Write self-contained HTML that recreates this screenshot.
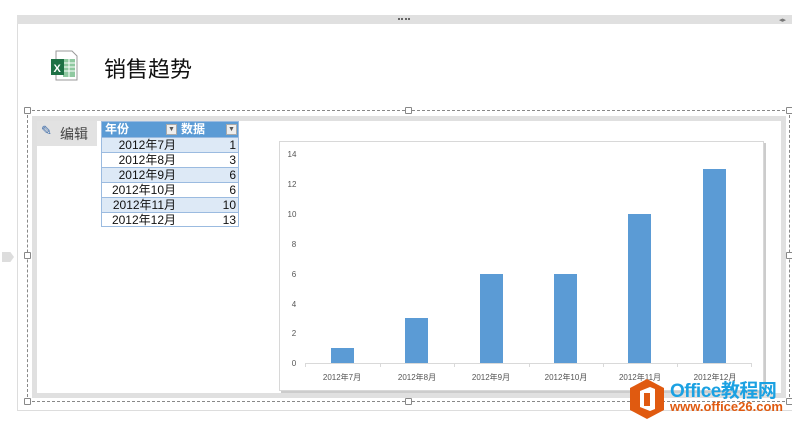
<!DOCTYPE html>
<html><head><meta charset="utf-8"><style>
*{margin:0;padding:0;box-sizing:border-box}
body{width:792px;height:425px;background:#fff;position:relative;overflow:hidden;font-family:"Liberation Sans","Noto Sans CJK SC",sans-serif}
.a{position:absolute}
.h{position:absolute;width:7px;height:7px;border:1px solid #888;background:#fff;border-radius:1px}
.r{position:absolute;left:0;width:136px;height:15px;line-height:14px;font-size:12px;border-top:1px solid #9bbbe0;color:#111}
.r .c1{position:absolute;right:62px;top:0}
.r .c2{position:absolute;right:2px;top:0}
.dd{position:absolute;top:2px;width:11px;height:11px;background:#eee;border:1px solid #aaa;font-size:7px;color:#555;text-align:center;line-height:10px}
</style></head><body>
<div class="a" style="left:17px;top:15px;width:775px;height:396px;border-left:1px solid #ddd;border-bottom:1px solid #ddd"></div>
<div class="a" style="left:17px;top:15px;width:775px;height:9px;background:#e0e0e0"></div>
<div class="a" style="left:398px;top:18px;width:12px;height:2px;border-top:2px dotted #666"></div>
<div class="a" style="left:779px;top:16px;font-size:7px;color:#777">◂▸</div>
<div class="a" style="left:2px;top:252px;width:12px;height:10px;background:#ddd;clip-path:polygon(0 0,70% 0,100% 50%,70% 100%,0 100%)"></div>
<svg class="a" style="left:50px;top:50px" width="28" height="31" viewBox="0 0 28 31">
<path d="M6 1h16l5 5v24H6z" fill="#fff" stroke="#999"/>
<rect x="13" y="9" width="12" height="18" fill="#8fc9a0"/>
<g stroke="#fff" stroke-width="1"><line x1="13" y1="13" x2="25" y2="13"/><line x1="13" y1="17" x2="25" y2="17"/><line x1="13" y1="21" x2="25" y2="21"/><line x1="19" y1="9" x2="19" y2="27"/></g>
<rect x="1" y="9" width="13" height="16" fill="#1e7145"/>
<text x="3.5" y="22" font-size="11" font-weight="bold" fill="#fff" font-family="Liberation Sans">X</text>
</svg>
<div class="a" style="left:104px;top:52px;font-size:22px;color:#111">销售趋势</div>
<div class="a" style="left:27px;top:110px;width:763px;height:292px;border:1px dashed #888"></div>
<div class="h" style="left:24px;top:107px"></div><div class="h" style="left:405px;top:107px"></div><div class="h" style="left:786px;top:107px"></div>
<div class="h" style="left:24px;top:252px"></div><div class="h" style="left:786px;top:252px"></div>
<div class="h" style="left:24px;top:398px"></div><div class="h" style="left:405px;top:398px"></div><div class="h" style="left:786px;top:398px"></div>
<div class="a" style="left:32px;top:116px;width:754px;height:282px;border:5px solid #e0e0e0;background:#fff"></div>
<div class="a" style="left:37px;top:121px;width:60px;height:25px;background:#e2e2e2"></div>
<div class="a" style="left:41px;top:123px;font-size:13px;color:#3a6aa8">✎</div>
<div class="a" style="left:60px;top:124px;font-size:14px;color:#444">编辑</div>
<div class="a" style="left:101px;top:121px;width:138px;height:106px;border:1px solid #9bbbe0;overflow:hidden">
 <div class="a" style="left:0;top:0;width:136px;height:15px;background:#5b9bd5;color:#fff;font-weight:bold;font-size:12px;line-height:14px">
  <span class="a" style="left:3px">年份</span><span class="dd" style="left:64px">▼</span>
  <span class="a" style="left:79px">数据</span><span class="dd" style="left:124px">▼</span>
 </div>
 <div class="r" style="top:15px;background:#dde9f6"><span class="c1">2012年7月</span><span class="c2">1</span></div>
 <div class="r" style="top:30px"><span class="c1">2012年8月</span><span class="c2">3</span></div>
 <div class="r" style="top:45px;background:#dde9f6"><span class="c1">2012年9月</span><span class="c2">6</span></div>
 <div class="r" style="top:60px"><span class="c1">2012年10月</span><span class="c2">6</span></div>
 <div class="r" style="top:75px;background:#dde9f6"><span class="c1">2012年11月</span><span class="c2">10</span></div>
 <div class="r" style="top:90px"><span class="c1">2012年12月</span><span class="c2">13</span></div>
</div>
<svg class="a" style="left:278px;top:140px" width="490" height="255" viewBox="278 140 490 255">
<rect x="279.5" y="141.5" width="484" height="249" fill="#fff" stroke="#d8d8d8"/>
<line x1="765" y1="143" x2="765" y2="392" stroke="#ccc" stroke-width="2"/>
<line x1="281" y1="392" x2="765" y2="392" stroke="#ccc" stroke-width="2"/>
<g font-size="8" fill="#555" font-family="Liberation Sans" text-anchor="middle">
<text x="292" y="157">14</text><text x="292" y="187">12</text><text x="292" y="217">10</text><text x="294" y="247">8</text><text x="294" y="277">6</text><text x="294" y="307">4</text><text x="294" y="336">2</text><text x="294" y="366">0</text>
</g>
<g fill="#5b9bd5">
<rect x="331" y="348" width="23" height="15"/><rect x="405" y="318" width="23" height="45"/><rect x="480" y="274" width="23" height="89"/><rect x="554" y="274" width="23" height="89"/><rect x="628" y="214" width="23" height="149"/><rect x="703" y="169" width="23" height="194"/>
</g>
<line x1="305" y1="363.5" x2="752" y2="363.5" stroke="#d9d9d9"/>
<g stroke="#d9d9d9"><line x1="305.5" y1="363" x2="305.5" y2="367"/><line x1="380.5" y1="363" x2="380.5" y2="367"/><line x1="454.5" y1="363" x2="454.5" y2="367"/><line x1="529.5" y1="363" x2="529.5" y2="367"/><line x1="603.5" y1="363" x2="603.5" y2="367"/><line x1="677.5" y1="363" x2="677.5" y2="367"/><line x1="751.5" y1="363" x2="751.5" y2="367"/></g>
<g font-size="8" fill="#555" font-family="Liberation Sans,Noto Sans CJK SC,sans-serif" text-anchor="middle">
<text x="342" y="380">2012年7月</text><text x="417" y="380">2012年8月</text><text x="491" y="380">2012年9月</text><text x="566" y="380">2012年10月</text><text x="640" y="380">2012年11月</text><text x="715" y="380">2012年12月</text>
</g>
</svg>
<svg class="a" style="left:628px;top:378px" width="38" height="42" viewBox="0 0 38 42">
<polygon points="19,1 36,10 36,32 19,41 2,32 2,10" fill="#e05a10"/>
<path d="M12 13l10-4 5 2v20l-5 2-10-4z" fill="#fff"/><path d="M16 15h6v13h-6z" fill="#e05a10"/>
</svg>
<div class="a" style="left:670px;top:376px;font-size:19px;font-weight:bold;color:#1ba1e2;letter-spacing:-0.5px">Office教程网</div>
<div class="a" style="left:670px;top:399px;font-size:13px;font-weight:bold;color:#e05a10">www.office26.com</div>
</body></html>
